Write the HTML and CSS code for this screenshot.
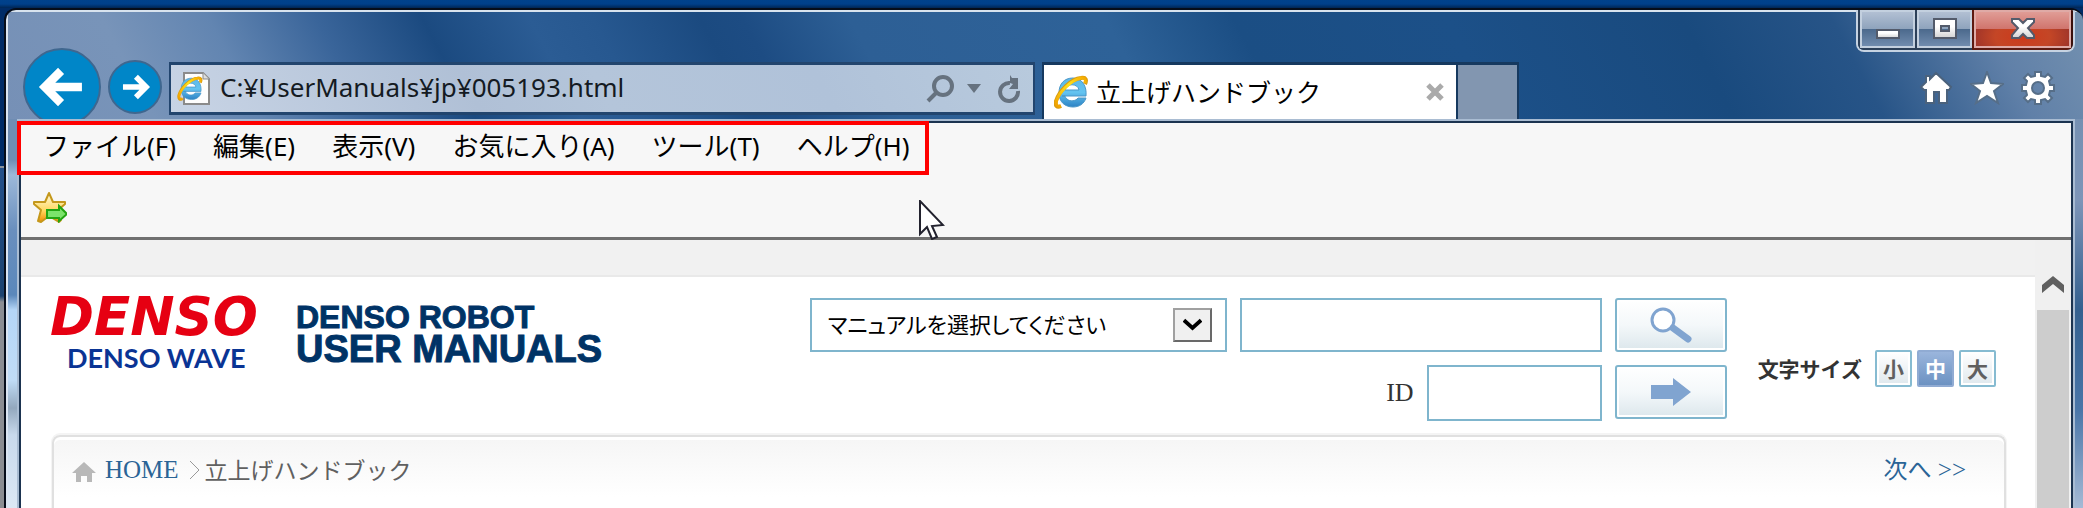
FILE: index.html
```html
<!DOCTYPE html>
<html lang="ja">
<head>
<meta charset="utf-8">
<title>立上げハンドブック</title>
<link rel="stylesheet" href="styles.css">
</head>
<body>
<svg class="defs" aria-hidden="true">
  <defs>
    <linearGradient id="eBlue" x1="0" y1="0" x2="0" y2="1"><stop offset="0" stop-color="#5db8e8"/><stop offset=".5" stop-color="#63c3f0"/><stop offset="1" stop-color="#2d82c4"/></linearGradient>
    <linearGradient id="eGold" x1="0" y1="1" x2="1" y2="0"><stop offset="0" stop-color="#f0a000"/><stop offset=".6" stop-color="#ffe21c"/><stop offset="1" stop-color="#f5a800"/></linearGradient>
    <linearGradient id="starGold" x1="0" y1="0" x2="0" y2="1"><stop offset="0" stop-color="#fffbe0"/><stop offset=".6" stop-color="#ffd860"/><stop offset="1" stop-color="#f08c00"/></linearGradient>
    <linearGradient id="glyph" x1="0" y1="0" x2="0" y2="1"><stop offset=".4" stop-color="#fff"/><stop offset="1" stop-color="#d2d2d2"/></linearGradient>
    <symbol id="ie" viewBox="0 0 34 34">
      <path d="M8 21h24c1-10-4-18-13-18S5 9 5 18s6 14 14 14c6 0 11-3 13-9h-8c-2 3-8 4-11 1-1-1-2-2-2-3zM11 15c1-7 13-7 14 0z" fill="url(#eBlue)" stroke="#4b97c8" stroke-width="1" fill-rule="evenodd"/>
      <path d="M31 9c2-4 1-7-4-6C17 4 5 16 2 26c-1 5 1 7 5 5" fill="none" stroke="#d99c10" stroke-width="4"/>
      <path d="M31 8c1-4 0-6-4-5C17 5 5 17 2 27c0 4 2 5 5 4" fill="none" stroke="url(#eGold)" stroke-width="3"/>
    </symbol>
  </defs>
</svg>

<div class="window">
  <header class="chrome">
    <div class="nav">
      <button class="back" aria-label="戻る"><svg viewBox="0 0 78 78"><path d="M60 39H22M38 22L21 39l17 17" fill="none" stroke="#fff" stroke-width="9"/></svg></button>
      <button class="forward" aria-label="進む"><svg viewBox="0 0 54 54"><path d="M14 27h24M28 16l11 11-11 11" fill="none" stroke="#fff" stroke-width="6"/></svg></button>
    </div>
    <div class="address">
      <svg class="page-icon" viewBox="0 0 34 34"><path d="M7 1h19l6 6v25H7z" fill="#fdfdfd" stroke="#8b8b8b" stroke-width="2"/><path d="M26 1v6h6" fill="#ddd" stroke="#8b8b8b"/><use href="#ie" x="0" y="4" width="26" height="25"/></svg>
      <input class="url" type="text" aria-label="アドレス" value="C:¥UserManuals¥jp¥005193.html">
      <button class="tool search-tool" aria-label="検索"><svg viewBox="0 0 28 28"><circle cx="17" cy="11" r="9" fill="none" stroke="#66727f" stroke-width="4"/><path d="M10 18l-8 8" stroke="#66727f" stroke-width="4"/></svg></button>
      <button class="tool menu-tool" aria-label="候補"><svg viewBox="0 0 14 9"><path d="M0 0h14L7 9z" fill="#66727f"/></svg></button>
      <button class="tool reload-tool" aria-label="更新"><svg viewBox="0 0 24 28"><path d="M13 8a9 9 0 1 0 8 8" fill="none" stroke="#66727f" stroke-width="4"/><path d="M13 0l2 3h6v11h-9l4-5-3-1z" fill="#66727f"/></svg></button>
    </div>
    <div class="tabs">
      <div class="tab">
        <svg class="tab-icon" viewBox="0 0 34 34"><use href="#ie"/></svg>
        <span class="tab-title">立上げハンドブック</span>
        <button class="tab-close" aria-label="タブを閉じる"><svg viewBox="0 0 18 18"><path d="M2 2l14 14M16 2L2 16" stroke="#aaa" stroke-width="5"/></svg></button>
      </div>
      <button class="new-tab" aria-label="新しいタブ"></button>
    </div>
    <div class="corner">
      <div class="captions">
        <button class="cap" aria-label="最小化"><svg viewBox="0 0 26 22"><rect x="2" y="12" width="22" height="8" fill="url(#glyph)" stroke="#535b6b" stroke-width="2"/></svg></button>
        <button class="cap" aria-label="最大化"><svg viewBox="0 0 26 22"><path d="M2 1h22v19H2zM9 8v5h8V8z" fill="url(#glyph)" fill-rule="evenodd" stroke="#535b6b" stroke-width="2"/></svg></button>
        <button class="cap close" aria-label="閉じる"><svg viewBox="0 0 26 22"><path d="M2 1h7l4 4 4-4h7v3l-6 6 6 7v3h-7l-4-4-4 4H2v-3l6-7-6-6z" fill="url(#glyph)" stroke="#535b6b" stroke-width="2"/></svg></button>
      </div>
      <div class="tools">
        <button class="tool" aria-label="ホーム"><svg viewBox="0 0 34 34"><path d="M17 2l15 14-2 3h-2v13h-8V21h-5v11H7V19H5l-3-3 5-5V5h4v3z" fill="#fff" stroke="#4b627c" stroke-width="2"/></svg></button>
        <button class="tool" aria-label="お気に入り"><svg viewBox="0 0 34 34"><path d="M17 1l4 11 12 1-9 7 4 12-11-7-11 7 4-12-9-7 12-1z" fill="#fff" stroke="#566e88" stroke-width="2"/></svg></button>
        <button class="tool" aria-label="ツール"><svg viewBox="0 0 34 34"><path d="M14 1h6v4l4 1 3-3 4 4-3 3 1 4h4v6h-4l-1 4 3 3-4 4-3-3-4 1v4h-6v-4l-4-1-3 3-4-4 3-3-1-4H1v-6h4l1-4-3-3 4-4 3 3 4-1zM17 11a6 6 0 1 0 0 12 6 6 0 0 0 0-12z" fill="#fff" fill-rule="evenodd" stroke="#566e88" stroke-width="2"/></svg></button>
      </div>
    </div>
  </header>

  <div class="client">
    <nav class="menubar" aria-label="メニュー">
      <button>ファイル(F)</button>
      <button>編集(E)</button>
      <button>表示(V)</button>
      <button>お気に入り(A)</button>
      <button>ツール(T)</button>
      <button>ヘルプ(H)</button>
    </nav>
    <div class="favbar">
      <button class="tool" aria-label="お気に入りバーに追加"><svg viewBox="0 0 34 32"><path d="M16 2l4 9h12v2l-8 7 4 9-2 2-10-6-8 6-3-1 3-11-7-6v-2h11z" fill="url(#starGold)" stroke="#c4981c" stroke-width="2" stroke-linejoin="round"/><path d="M14 19h12v-4l8 8-8 7v-3H14z" fill="#7be36b" stroke="#22a512" stroke-width="2"/></svg></button>
    </div>
    <div class="viewport">
      <div class="page">
        <div class="page-top"></div>
        <div class="page-head">
          <div class="brand">
            <span class="brand-name">DENSO</span>
            <span class="brand-sub">DENSO WAVE</span>
          </div>
          <h1 class="product"><span class="product-top">DENSO ROBOT</span><span class="product-main">USER MANUALS</span></h1>
          <form class="search">
            <div class="row">
              <div class="picker">
                <select aria-label="マニュアル"><option>マニュアルを選択してください</option></select>
                <svg class="picker-arrow" viewBox="0 0 20 14"><path d="M1 2l9 8 9-8" fill="none" stroke="#000" stroke-width="4"/></svg>
              </div>
              <input class="box keyword" type="text" aria-label="キーワード">
              <button class="go" type="button" aria-label="検索"><svg viewBox="0 0 42 36"><circle cx="13" cy="13" r="11" fill="#fff" stroke="#80a4d0" stroke-width="3"/><path d="M23 21l15 11" stroke="#80a4d0" stroke-width="7" stroke-linecap="round"/></svg></button>
            </div>
            <div class="row">
              <label for="docid">ID</label>
              <input class="box docid" id="docid" type="text">
              <button class="go" type="button" aria-label="移動"><svg viewBox="0 0 42 36"><path d="M1 11h22V4l18 14-18 14v-7H1z" fill="#80a4d0"/></svg></button>
            </div>
          </form>
          <div class="sizes">
            <span class="sizes-label">文字サイズ</span>
            <button>小</button><button class="on">中</button><button>大</button>
          </div>
        </div>
        <div class="crumbs">
          <svg class="crumb-home" viewBox="0 0 24 22"><path d="M12 1l12 11h-4v9h-5v-6H9v6H4v-9H0z" fill="#b8b8b8"/></svg>
          <a class="home" href="#">HOME</a>
          <svg class="crumb-sep" viewBox="0 0 11 20"><path d="M1 1l9 9-9 9" fill="none" stroke="#999" stroke-width="1"/></svg>
          <span class="crumb-title">立上げハンドブック</span>
          <a class="next" href="#">次へ <span class="serif">&gt;&gt;</span></a>
        </div>
      </div>
      <div class="scrollbar">
        <svg class="scroll-up" viewBox="0 0 24 20"><path d="M1 18v-8L12 1l11 9v8L12 9z" fill="#606060"/></svg>
        <div class="thumb"></div>
      </div>
    </div>
  </div>
  <svg class="pointer" viewBox="0 0 26 40"><path d="M1 1v33l7-7 5 12 5-2-5-11 11-1z" fill="#fff" stroke="#22222e" stroke-width="2"/></svg>
</div>
</body>
</html>
```

FILE: styles.css
```css
*, *::after { box-sizing: border-box; }

body {
  margin: 0;
  height: 100vh;
  overflow: hidden;
  display: flex;
  font-family: "Noto Sans", "Noto Sans CJK JP", sans-serif;
  background:
    linear-gradient(#00428c, #00408a 4px, #002654) 0 0 / 100% 8px no-repeat,
    linear-gradient(#002b66 0 166px, #8a929c 166px 168px, #24508a 168px, #1b426f 296px, #8b8d92 302px);
}

.defs { position: absolute; width: 0; height: 0; }

button { padding: 0; border: 0; background: none; font: inherit; color: inherit; }
svg { display: block; }

.window {
  position: relative;
  flex: 1;
  display: flex;
  flex-direction: column;
  margin: 8px 0 0 4px;
  border: 2px solid #060d1a;
  border-width: 2px 0 0 2px;
  border-radius: 12px 12px 0 0;
  overflow: hidden;
  background:
    linear-gradient(#d8e3ee, #d8e3ee) 0 0 / 100% 2px no-repeat,
    linear-gradient(#dbe5f2, #dbe5f2) 0 0 / 2px 100% no-repeat,
    linear-gradient(62deg, #7690b6 0, #7894b9 7%, #6285b1 12%, #3a659a 17%, #1b4a80 22%, #2b5c94 27%, #275890 30%, #1b4a80 35%, #1d4c83 37%, #2d5f95 42%, #2e6298 54%, #1b4e84 60%, #1c5088 70%, #194a7e 81%, #275487 88%, #6080a8 95%, #7491b0 100%) 0 0 / 100% 109px no-repeat,
    linear-gradient(#6f8db3 109px, #6f8db3 150px, #9db9d9 165px, #6a8fbe 220px, #5b88bb 285px, #b5d6f7 300px, #c0dcf6 370px, #93a8be 398px, #c8d9ec 425px, #dce8f5) 0 0 / 50% 100% no-repeat,
    linear-gradient(#7590b2 109px, #7d95b8 190px, #34608f 300px, #4a76a8 400px, #a5bad5) 100% 0 / 50% 100% no-repeat;
}

.chrome { display: flex; align-items: flex-start; height: 109px; overflow: hidden; }

.nav { display: flex; align-items: flex-start; gap: 7px; padding-left: 17px; }
.back, .forward { border-radius: 50%; border: 2px solid #3f678f; background: #0086c8; overflow: hidden; }
.back { width: 78px; height: 78px; margin-top: 38px; }
.forward { width: 54px; height: 54px; margin-top: 50px; }

.address {
  flex: 0 1 866px;
  display: flex;
  align-items: center;
  height: 53px;
  margin: 52px 0 0 7px;
  padding: 0 12px 0 6px;
  border: 2px solid #22456e;
  border-width: 3px 2px;
  background: linear-gradient(62deg, #c8d4e5, #b0c0d6 35%, #b4c5da 50%, #b0c2d9 75%, #b8cadd);
}
.page-icon { width: 34px; height: 34px; margin-right: 9px; }
.url { flex: 1; min-width: 0; border: 0; padding: 0 0 3px; background: none; font: 26px "Noto Sans", sans-serif; color: #141a22; }
.search-tool { width: 28px; }
.menu-tool { width: 14px; margin: 0 16px 0 13px; }
.reload-tool { width: 24px; }

.tabs { display: flex; height: 57px; margin: 52px 0 0 7px; border: 2px solid #16395f; border-width: 3px 2px 0; }
.tab { display: flex; align-items: center; width: 414px; padding: 0 12px 0 10px; border-right: 2px solid #16395f; background: #fff; }
.tab-icon { width: 34px; height: 34px; margin-right: 8px; }
.tab-title { flex: 1; font-size: 25px; line-height: 36px; color: #000; }
.tab-close svg { width: 18px; }
.new-tab { width: 59px; background: #8296b0; }

.corner { margin-left: auto; display: flex; flex-direction: column; align-items: flex-end; }
.captions {
  display: flex;
  height: 42px;
  margin-right: 8px;
  border: 2px solid #c6d3e2;
  border-top: 0;
  border-radius: 0 0 8px 8px;
  overflow: hidden;
}
.cap {
  display: flex;
  align-items: center;
  justify-content: center;
  width: 57px;
  border: 2px solid #2c4059;
  border-width: 0 0 2px 2px;
  box-shadow: inset 0 0 0 2px #c3d0df;
  background: linear-gradient(#b6c3d6, #8ea3bc 50%, #4b698c 50%, #7590b2);
}
.cap svg { width: 26px; height: 22px; }
.close {
  width: 101px;
  border-color: #5e1a10;
  border-right: 2px solid #3a0f0c;
  box-shadow: inset 0 0 0 2px #dfaaa6;
  background: linear-gradient(#e2a19b, #d0746c 50%, transparent 50%), radial-gradient(ellipse at 50% 70%, #cc3a1c, #c44626 40%, #96302a 80%);
}
.tools { display: flex; gap: 17px; margin: 19px 28px 0 0; }
.tools .tool { width: 34px; }

.client {
  flex: 1;
  display: flex;
  flex-direction: column;
  margin: 0 8px 0 11px;
  border: 2px solid #a9bcd2;
  border-bottom: 0;
  box-shadow: inset 2px 2px 0 #1b3350, inset -2px 0 0 #1b3350;
  padding: 2px 2px 0;
}

.menubar {
  position: relative;
  display: flex;
  align-items: center;
  gap: 37px;
  height: 52px;
  padding: 0 0 6px 22px;
  background: #f7f7f7;
  font-size: 26px;
  line-height: 36px;
  color: #000;
}
.menubar::after {
  content: "";
  position: absolute;
  left: -4px;
  top: -2px;
  width: 912px;
  height: 54px;
  border: 4px solid #f00;
  pointer-events: none;
}

.favbar { height: 65px; padding: 16px 12px; border-bottom: 3px solid #707070; background: #f7f7f7; }
.favbar .tool { width: 34px; }

.viewport { flex: 1; display: flex; background: #fff; }
.page { flex: 1; }
.page-top { height: 37px; border-bottom: 2px solid #e9e9e9; background: #f1f1f1; }

.page-head { display: flex; align-items: flex-start; height: 158px; padding: 21px 39px 0 29px; }
.brand { display: flex; flex-direction: column; width: 246px; white-space: nowrap; }
.brand-name { font: italic 700 53px/38px "DejaVu Sans", sans-serif; color: #e60012; }
.brand-sub { margin-top: 5px; padding-left: 17px; font: 700 27px/34px Lato, sans-serif; color: #0a3494; }
.product {
  display: flex;
  flex-direction: column;
  margin: 3px 0 0;
  font: 700 32px/32px "Liberation Sans", Arial, sans-serif;
  color: #036;
  white-space: nowrap;
  -webkit-text-stroke: 1px #036;
}
.product-main { font-size: 38px; }

.search { flex: none; display: flex; flex-direction: column; gap: 13px; margin-left: auto; }
.row { display: flex; align-items: flex-start; justify-content: flex-end; gap: 13px; }
.picker { position: relative; }
.picker select {
  appearance: none;
  width: 417px;
  height: 54px;
  padding: 0 0 4px 16px;
  border: 2px solid #7fb5cd;
  border-radius: 0;
  background: #fff;
  font: 22px "Noto Sans CJK JP", sans-serif;
  font-feature-settings: "palt";
  color: #000;
}
.picker-arrow {
  position: absolute;
  right: 15px;
  top: 10px;
  width: 39px;
  height: 34px;
  padding: 8px;
  border: 2px solid #a0a0a0;
  border-right-color: #696969;
  border-bottom-color: #696969;
  background: #f0f0f0;
  pointer-events: none;
}
.box { height: 54px; border: 2px solid #7fb5cd; padding: 0 8px; background: #fff; font-size: 22px; }
.keyword { width: 362px; }
.docid { width: 175px; height: 56px; }
.row label { font: 26px/56px "Liberation Serif", serif; color: #333; }
.go {
  display: flex;
  align-items: center;
  justify-content: center;
  width: 112px;
  height: 54px;
  border: 2px solid #7fb5cd;
  border-radius: 3px;
  box-shadow: inset 0 0 0 2px #fff;
  background: linear-gradient(#fff, #f4f8fa 50%, #dce7ec);
}
.go svg { width: 42px; height: 36px; }

.sizes { flex: none; display: flex; align-items: center; gap: 5px; margin: 52px 0 0 31px; font: 700 21px/33px "Noto Sans CJK JP", sans-serif; color: #333; }
.sizes-label { margin-right: 8px; }
.sizes button {
  width: 37px;
  height: 37px;
  border: 2px solid #86bbd1;
  border-radius: 2px;
  box-shadow: inset 0 0 0 2px #fff;
  background: linear-gradient(#fff, #dfe8ed);
  color: #606060;
}
.sizes .on { border-color: #90abd3; box-shadow: none; background: linear-gradient(#9ab5dc, #6c92c2); color: #fff; }

.crumbs {
  display: flex;
  align-items: center;
  height: 73px;
  margin: 0 29px 0 31px;
  padding: 0 38px 6px 18px;
  border: 2px solid #e0e0e0;
  border-bottom: 0;
  border-radius: 8px 8px 0 0;
  box-shadow: inset 0 3px 0 #fff, 0 -1px 0 1px #f4f4f4;
  background: linear-gradient(#f5f5f5, #fff 60px);
}
.crumb-home { width: 24px; height: 22px; margin: 4px 9px 0 0; }
.crumbs a { color: #2a6496; text-decoration: none; }
.home, .serif { font: 25px/36px "Liberation Serif", serif; }
.crumb-sep { width: 11px; height: 20px; margin: 0 5px 0 10px; }
.crumb-title { font-size: 23px; line-height: 36px; color: #606060; }
.crumbs .next { margin-left: auto; font-size: 24px; line-height: 36px; }

.scrollbar { width: 36px; display: flex; flex-direction: column; padding: 35px 2px 0; background: #f0f0f0; }
.scroll-up { width: 24px; height: 20px; margin: 0 0 15px 4px; }
.thumb { flex: 1; background: #cdcdcd; }

.pointer { position: absolute; left: 913px; top: 190px; width: 26px; height: 40px; }
```
